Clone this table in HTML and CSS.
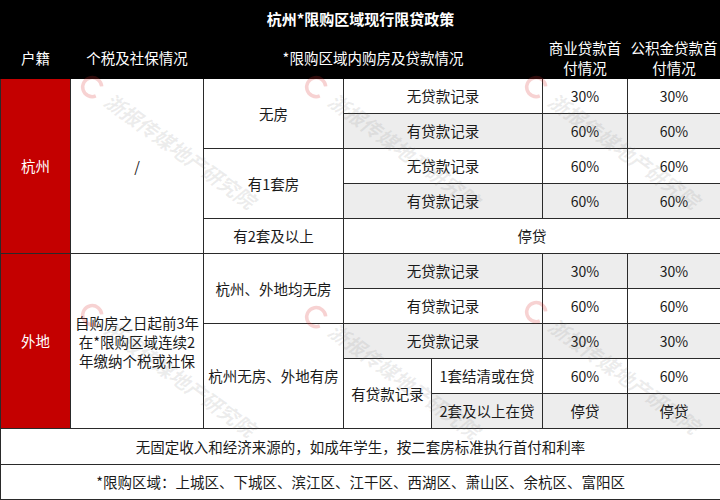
FILE: index.html
```html
<!DOCTYPE html>
<html lang="zh-CN">
<head>
<meta charset="utf-8">
<title>杭州*限购区域现行限贷政策</title>
<link rel="stylesheet" href="styles.css">
</head>
<body>
<div class="wrap">
  <table class="policy">
    <colgroup>
      <col class="c1"><col class="c2"><col class="c3"><col class="c4a"><col class="c4b"><col class="c5"><col class="c6">
    </colgroup>
    <tr class="title"><th colspan="7">杭州*限购区域现行限贷政策</th></tr>
    <tr class="head">
      <th>户籍</th>
      <th>个税及社保情况</th>
      <th colspan="3">*限购区域内购房及贷款情况</th>
      <th>商业贷款首<br>付情况</th>
      <th>公积金贷款首<br>付情况</th>
    </tr>
    <tr class="row">
      <td rowspan="5" class="city">杭州</td>
      <td rowspan="5">/</td>
      <td rowspan="2">无房</td>
      <td colspan="2">无贷款记录</td>
      <td class="num">30%</td><td class="num">30%</td>
    </tr>
    <tr class="row alt">
      <td colspan="2">有贷款记录</td>
      <td class="num">60%</td><td class="num">60%</td>
    </tr>
    <tr class="row">
      <td rowspan="2">有1套房</td>
      <td colspan="2">无贷款记录</td>
      <td class="num">60%</td><td class="num">60%</td>
    </tr>
    <tr class="row alt">
      <td colspan="2">有贷款记录</td>
      <td class="num">60%</td><td class="num">60%</td>
    </tr>
    <tr class="row">
      <td>有2套及以上</td>
      <td colspan="4">停贷</td>
    </tr>
    <tr class="row alt">
      <td rowspan="5" class="city">外地</td>
      <td rowspan="5" class="plain multi">自购房之日起前3年<br>在*限购区域连续2<br>年缴纳个税或社保</td>
      <td rowspan="2" class="plain">杭州、外地均无房</td>
      <td colspan="2">无贷款记录</td>
      <td class="num">30%</td><td class="num">30%</td>
    </tr>
    <tr class="row">
      <td colspan="2">有贷款记录</td>
      <td class="num">60%</td><td class="num">60%</td>
    </tr>
    <tr class="row alt">
      <td rowspan="3" class="plain">杭州无房、外地有房</td>
      <td colspan="2">无贷款记录</td>
      <td class="num">30%</td><td class="num">30%</td>
    </tr>
    <tr class="row">
      <td rowspan="2" class="plain">有贷款记录</td>
      <td>1套结清或在贷</td>
      <td class="num">60%</td><td class="num">60%</td>
    </tr>
    <tr class="row alt">
      <td>2套及以上在贷</td>
      <td>停贷</td><td>停贷</td>
    </tr>
    <tr class="foot"><td colspan="7">无固定收入和经济来源的，如成年学生，按二套房标准执行首付和利率</td></tr>
    <tr class="foot last"><td colspan="7">*限购区域：上城区、下城区、滨江区、江干区、西湖区、萧山区、余杭区、富阳区</td></tr>
  </table>

  <div class="marks" aria-hidden="true">
    <div class="mark m1"><svg class="logo" viewBox="0 0 30 30"><path d="M24 8 A11 11 0 1 0 25 21" fill="none" stroke-width="4"/></svg><span class="mk">浙报传媒地产研究院</span></div>
    <div class="mark m2"><svg class="logo" viewBox="0 0 30 30"><path d="M24 8 A11 11 0 1 0 25 21" fill="none" stroke-width="4"/></svg><span class="mk">浙报传媒地产研究院</span></div>
    <div class="mark m3"><svg class="logo" viewBox="0 0 30 30"><path d="M24 8 A11 11 0 1 0 25 21" fill="none" stroke-width="4"/></svg><span class="mk">浙报传媒地产研究院</span></div>
    <div class="mark m4"><svg class="logo" viewBox="0 0 30 30"><path d="M24 8 A11 11 0 1 0 25 21" fill="none" stroke-width="4"/></svg><span class="mk">浙报传媒地产研究院</span></div>
    <div class="mark m5"><svg class="logo" viewBox="0 0 30 30"><path d="M24 8 A11 11 0 1 0 25 21" fill="none" stroke-width="4"/></svg><span class="mk">浙报传媒地产研究院</span></div>
    <div class="mark m6"><svg class="logo" viewBox="0 0 30 30"><path d="M24 8 A11 11 0 1 0 25 21" fill="none" stroke-width="4"/></svg><span class="mk">浙报传媒地产研究院</span></div>
  </div>
</div>
</body>
</html>
```

FILE: styles.css
```css
html, body {
  margin: 0;
  padding: 0;
  background: #ffffff;
}

body {
  font-family: "Noto Sans CJK SC", "Noto Sans", sans-serif;
  color: #1a1a1a;
  width: 720px;
  height: 500px;
  overflow: hidden;
}

.wrap {
  position: relative;
  width: 720px;
  height: 500px;
}

.policy {
  width: 720px;
  table-layout: fixed;
  border-collapse: collapse;
  font-size: 14.5px;
}

.c1 { width: 70px; }
.c2 { width: 133px; }
.c3 { width: 140px; }
.c4a { width: 88px; }
.c4b { width: 111px; }
.c5 { width: 85px; }
.c6 { width: 93px; }

.policy th,
.policy td {
  padding: 0;
  text-align: center;
  vertical-align: middle;
  border: 1px solid #2a2a2a;
  line-height: 18px;
  overflow: hidden;
  white-space: nowrap;
}

.title th {
  background: #000;
  color: #fff;
  font-weight: bold;
  font-size: 15px;
  height: 36px;
  border-color: #000;
}

.head th {
  background: #000;
  color: #fff;
  font-weight: normal;
  height: 40px;
  border-color: #000;
  line-height: 20px;
}

.row td {
  height: 34px;
  background: #ffffff;
}

.row.alt td {
  background: #ededed;
}

.row.alt td.plain,
.row td.plain {
  background: #ffffff;
}

.policy td.city {
  background: #c40000;
  color: #ffffff;
}

.policy td.num {
  font-size: 14px;
}

.policy td.multi {
  line-height: 19px;
}

.foot td {
  height: 35px;
  background: #ffffff;
}

.foot.last td {
  height: 34px;
}

.marks {
  position: absolute;
  left: 0;
  top: 0;
  width: 720px;
  height: 500px;
  pointer-events: none;
  overflow: hidden;
}

.mark {
  position: absolute;
  display: flex;
  align-items: center;
  gap: 6px;
  transform: rotate(36deg);
  transform-origin: 13px 13px;
}

.logo {
  width: 26px;
  height: 26px;
  stroke: rgba(220, 50, 50, 0.22);
}

.mk {
  font-size: 20px;
  font-weight: bold;
  font-style: italic;
  color: rgba(110, 110, 110, 0.12);
  white-space: nowrap;
}

.m1 { left: 80px; top: 72px; }
.m2 { left: 304px; top: 72px; }
.m3 { left: 524px; top: 72px; }
.m4 { left: 80px; top: 300px; }
.m5 { left: 304px; top: 302px; }
.m6 { left: 524px; top: 297px; }
```
